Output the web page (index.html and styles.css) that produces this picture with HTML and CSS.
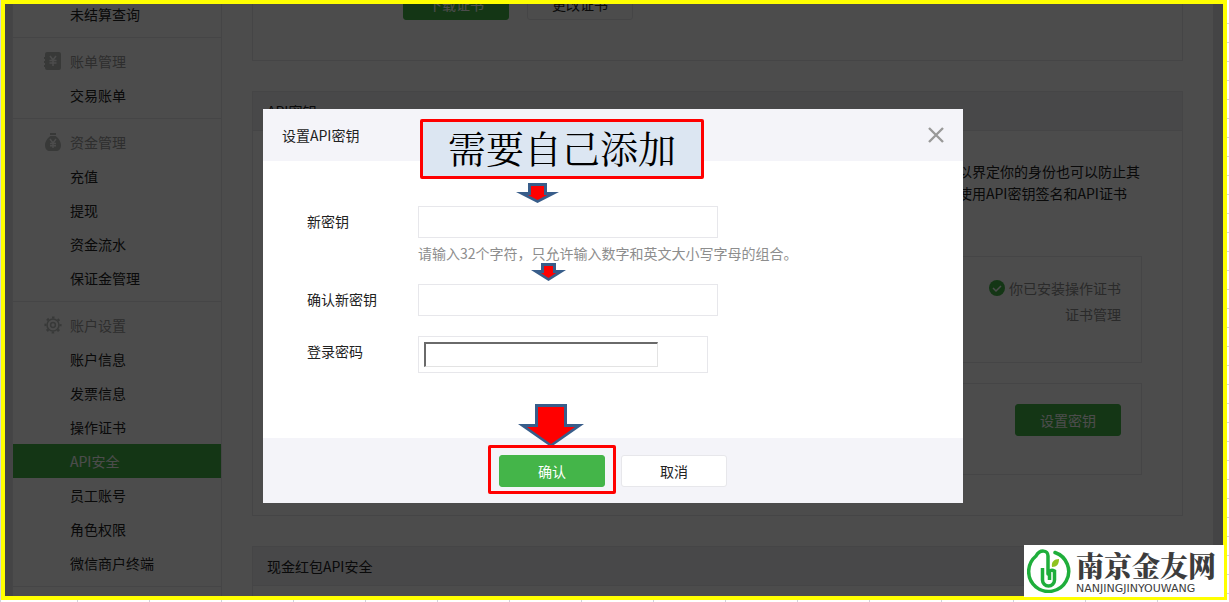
FILE: index.html
```html
<!DOCTYPE html>
<html lang="zh-CN">
<head>
    <meta charset="UTF-8">
    <meta name="viewport" content="width=device-width, initial-scale=1.0">
    <title>API安全</title>
    <link rel="stylesheet" href="styles.css">
</head>
<body>
    <div class="frame">
        <div class="page">
            <nav class="sidebar">
                <div class="menu-group">
                    <a class="menu-item" href="#">未结算查询</a>
                </div>
                <div class="menu-group">
                    <div class="menu-title">
                        <svg class="menu-icon" viewBox="0 0 18 18">
                            <path fill="#bbbfbd" d="M3 0h12a2 2 0 0 1 2 2v14a2 2 0 0 1-2 2H3a2 2 0 0 1-2-2v-1H0v-2h1v-2H0V9h1V7H0V5h1V2a2 2 0 0 1 2-2z"/>
                            <path fill="none" stroke="#fff" stroke-width="1.500" d="M6 4l3 4 3-4M5.500 8.500h7M5.500 11h7M9 8v6"/>
                        </svg>
                        账单管理
                    </div>
                    <a class="menu-item" href="#">交易账单</a>
                </div>
                <div class="menu-group">
                    <div class="menu-title">
                        <svg class="menu-icon" viewBox="0 0 18 18">
                            <path fill="#bbbfbd" d="M6 0h6v2H6zM6.500 3h5c3 2 5.500 5.500 5.500 9 0 4-2 6-5 6H6c-3 0-5-2-5-6 0-3.500 2.500-7 5.500-9z"/>
                            <path fill="none" stroke="#fff" stroke-width="1.400" d="M6 6l3 4 3-4M6 10.500h6M6 12.800h6M9 10v5"/>
                        </svg>
                        资金管理
                    </div>
                    <a class="menu-item" href="#">充值</a>
                    <a class="menu-item" href="#">提现</a>
                    <a class="menu-item" href="#">资金流水</a>
                    <a class="menu-item" href="#">保证金管理</a>
                </div>
                <div class="menu-group">
                    <div class="menu-title">
                        <svg class="menu-icon" viewBox="0 0 18 18" fill="none" stroke="#bbbfbd">
                            <circle cx="9" cy="9" r="6" stroke-width="1.600"/>
                            <circle cx="9" cy="9" r="2.400" stroke-width="1.500"/>
                            <circle cx="9" cy="9" r="7.600" stroke-width="2" stroke-dasharray="2.600 3.370" stroke-dashoffset="1.300"/>
                        </svg>
                        账户设置
                    </div>
                    <a class="menu-item" href="#">账户信息</a>
                    <a class="menu-item" href="#">发票信息</a>
                    <a class="menu-item" href="#">操作证书</a>
                    <a class="menu-item active" href="#">API安全</a>
                    <a class="menu-item" href="#">员工账号</a>
                    <a class="menu-item" href="#">角色权限</a>
                    <a class="menu-item" href="#">微信商户终端</a>
                </div>
                <div class="menu-group"></div>
            </nav>

            <main class="content">
                <section class="card card-cert">
                    <button class="btn btn-primary" type="button">下载证书</button>
                    <button class="btn" type="button">更改证书</button>
                </section>

                <section class="card">
                    <h2 class="card-title">API密钥</h2>
                    <div class="card-body">
                        <p class="card-text">以界定你的身份也可以防止其<br>使用API密钥签名和API证书</p>
                        <div class="panel panel-status">
                            <div class="status">
                                <svg class="status-icon" viewBox="0 0 16 16">
                                    <circle cx="8" cy="8" r="8" fill="#44b549"/>
                                    <path fill="none" stroke="#fff" stroke-width="1.500" d="M4 8l3 3 5-5"/>
                                </svg>
                                你已安装操作证书
                            </div>
                            <a class="panel-link" href="#">证书管理</a>
                        </div>
                        <div class="panel">
                            <button class="btn btn-primary" type="button">设置密钥</button>
                        </div>
                    </div>
                </section>

                <section class="card">
                    <h2 class="card-title">现金红包API安全</h2>
                    <div class="card-body"></div>
                </section>
            </main>
        </div>

        <div class="mask">
            <form class="dialog">
                <header class="dialog-header">
                    <h3 class="dialog-title">设置API密钥</h3>
                    <button class="dialog-close" type="button" aria-label="关闭">
                        <svg viewBox="0 0 16 16" width="16" height="16">
                            <path stroke="#999" stroke-width="2.400" d="M1 1l14 14M15 1L1 15"/>
                        </svg>
                    </button>
                </header>

                <div class="dialog-body">
                    <div class="field">
                        <label class="field-label" for="new-key">新密钥</label>
                        <div class="field-control">
                            <input class="text-input" id="new-key" type="text">
                            <p class="field-tip">请输入32个字符，只允许输入数字和英文大小写字母的组合。</p>
                        </div>
                    </div>
                    <div class="field">
                        <label class="field-label" for="confirm-key">确认新密钥</label>
                        <input class="text-input" id="confirm-key" type="text">
                    </div>
                    <div class="field">
                        <label class="field-label" for="password">登录密码</label>
                        <div class="password-box">
                            <input class="password-input" id="password" type="password">
                        </div>
                    </div>
                </div>

                <footer class="dialog-footer">
                    <button class="btn btn-primary" type="button">确认</button>
                    <button class="btn" type="button">取消</button>
                </footer>

                <!-- annotations -->
                <div class="callout">需要自己添加</div>
                <svg class="arrow arrow-first" viewBox="0 0 43 20">
                    <path fill="#385d8a" d="M12 0h19v9h12L21.500 20 0 9h12z"/>
                    <path fill="#f00" d="M15 3h13v9h3l-9.500 5-9.500-5h3z"/>
                </svg>
                <svg class="arrow arrow-second" viewBox="0 0 35 18">
                    <path fill="#385d8a" d="M10 0h15v7h10L17.500 18 0 7h10z"/>
                    <path fill="#f00" d="M13 3h9v7h3l-7.500 5L10 10h3z"/>
                </svg>
                <svg class="arrow arrow-third" viewBox="0 0 66 43">
                    <path fill="#385d8a" d="M17 0h32v20h17L33 43 0 20h17z"/>
                    <path fill="#f00" d="M20 3h26v20h11L33 40 9 23h11z"/>
                </svg>
                <div class="highlight"></div>
            </form>
        </div>
    </div>

    <div class="logo">
        <svg class="logo-mark" viewBox="0 0 44 44">
            <path fill="none" stroke="#1fae3b" stroke-width="3.500" stroke-linecap="round" d="M28 3.500A20 20 0 1 1 9 7C13 0 21 1 21 7v18"/>
            <path fill="none" stroke="#1fae3b" stroke-width="3.500" d="M15.500 19v12a6 6 0 0 0 12 0v-9c-2-1-5-1-5 1v8"/>
            <path fill="#8fc31f" d="M25 18c-1-5 2-8 7-8 0 5-2 8-7 8z"/>
        </svg>
        <div class="logo-text">
            <div class="logo-name">南京金友网</div>
            <div class="logo-latin">NANJINGJINYOUWANG</div>
        </div>
    </div>
</body>
</html>
```
FILE: styles.css
```css
* {
    box-sizing: border-box;
}

body {
    margin: 0;
    padding: 0 2px 2px 1px;
    height: 100vh;
    overflow: hidden;
    position: relative;
    font-family: "Noto Sans CJK SC", sans-serif;
    font-size: 14px;
    color: #222;
    background-color: #fff;
    background-image:
        repeating-linear-gradient(to bottom, transparent 0, transparent 18px, #d0d3dc 18px, #d0d3dc 19px),
        repeating-linear-gradient(to right, transparent 0, transparent 71px, #d0d3dc 71px, #d0d3dc 72px);
    background-position: 0 5px, 6px 0;
}

h2, h3, p {
    margin: 0;
    font-size: 14px;
    font-weight: normal;
}

a {
    color: inherit;
    text-decoration: none;
}

button, input {
    font: inherit;
}

.frame {
    height: 100%;
    border: 4px solid #ff0;
    position: relative;
    overflow: hidden;
    background: #e3e5e8;
}

/* scrolled a little way down */
.page {
    margin: -16px 10px 0 7px;
    display: flex;
    background: #fff;
}

.sidebar {
    width: 210px;
    flex-shrink: 0;
    border: solid #e7e7eb;
    border-width: 0 1px;
}

.menu-group {
    padding: 6px 0;
    border-bottom: 1px solid #e7e7eb;
}

.menu-group:first-child {
    padding-top: 9px;
}

.menu-title,
.menu-item {
    display: flex;
    align-items: center;
    height: 34px;
    padding-left: 57px;
}

.menu-title {
    padding-left: 31px;
    gap: 8px;
    color: #9a9a9a;
}

.menu-icon {
    width: 18px;
    height: 18px;
}

.menu-item.active {
    background: #44b549;
    color: #fff;
}

.content {
    flex: 1;
    padding: 0 30px;
}

.card {
    border: 1px solid #e7e7eb;
    margin-bottom: 30px;
}

.card-cert {
    display: flex;
    gap: 18px;
    padding: 0 150px 40px;
    border-top: 0;
}

.card-title {
    height: 39px;
    line-height: 38px;
    padding-left: 14px;
    background: #f0f0f6;
    border-bottom: 1px solid #e7e7eb;
}

.card-body {
    padding: 29px 40px 40px;
}

.card-text {
    width: 182px;
    margin: 0 2px 52px auto;
    line-height: 22px;
    white-space: nowrap;
}

.panel {
    display: flex;
    flex-direction: column;
    align-items: flex-end;
    min-height: 92px;
    padding: 20px;
    border: 1px solid #e7e7eb;
}

.panel-status {
    min-height: 107px;
    margin-bottom: 20px;
    padding-top: 18px;
    line-height: 26px;
    color: #8d8d8d;
}

.status {
    display: flex;
    align-items: center;
    gap: 4px;
}

.status-icon {
    width: 16px;
    height: 16px;
}

.btn {
    width: 106px;
    height: 32px;
    padding: 0;
    border: 1px solid #e7e7eb;
    border-radius: 3px;
    background: #fff;
    color: #222;
}

.btn-primary {
    border-color: #44b549;
    background: #44b549;
    color: #fff;
}

.mask {
    position: absolute;
    inset: 0;
    display: flex;
    justify-content: center;
    align-items: flex-start;
    padding: 105px 2px 0 0;
    background: rgba(0, 0, 0, 0.7);
}

.dialog {
    position: relative;
    width: 700px;
    background: #fff;
}

.dialog-header {
    display: flex;
    justify-content: space-between;
    align-items: center;
    height: 52px;
    padding: 0 19px;
    background: #f4f4f9;
}

.dialog-close {
    display: flex;
    padding: 0;
    border: 0;
    background: none;
}

.dialog-body {
    padding: 45px 44px 65px;
}

.field {
    display: flex;
    align-items: flex-start;
    margin-top: 20px;
}

.field:first-child {
    margin-top: 0;
}

.field-label {
    width: 111px;
    line-height: 30px;
}

.text-input {
    display: block;
    width: 300px;
    height: 32px;
    border: 1px solid #e7e7eb;
    background: #fff;
}

.field-tip {
    padding-top: 4px;
    line-height: 22px;
    color: #8d8d8d;
}

.password-box {
    width: 290px;
    padding: 5px;
    border: 1px solid #e7e7eb;
}

.password-input {
    display: block;
    width: 234px;
    height: 25px;
    border: solid;
    border-width: 2px 1px 1px 2px;
    border-color: #6a6a6a #e3e3e3 #e3e3e3 #6a6a6a;
    background: #fff;
}

.dialog-footer {
    display: flex;
    justify-content: center;
    gap: 16px;
    padding: 17px 0 16px;
    background: #f4f4f9;
}

.callout {
    position: absolute;
    left: 157px;
    top: 10px;
    width: 284px;
    height: 60px;
    line-height: 50px;
    border: 3px solid #f00;
    border-radius: 2px;
    background: #dce6f2;
    color: #000;
    font-family: "Noto Serif CJK SC", "Noto Sans CJK SC", serif;
    font-size: 38px;
    text-align: center;
}

.arrow {
    position: absolute;
}

.arrow-first {
    left: 253px;
    top: 74px;
    width: 43px;
}

.arrow-second {
    left: 268px;
    top: 154px;
    width: 35px;
}

.arrow-third {
    left: 255px;
    top: 295px;
    width: 66px;
}

.highlight {
    position: absolute;
    left: 225px;
    top: 336px;
    width: 128px;
    height: 49px;
    border: 3px solid #f00;
    border-radius: 2px;
    pointer-events: none;
}

.logo {
    position: absolute;
    right: 5px;
    bottom: 5px;
    display: flex;
    align-items: center;
    gap: 5px;
    width: 200px;
    height: 52px;
    padding-left: 3px;
    background: #fff;
    color: #3c3c3c;
}

.logo-mark {
    width: 44px;
    height: 44px;
}

.logo-name {
    font-family: "Noto Serif CJK SC", "Noto Sans CJK SC", serif;
    font-size: 28px;
    font-weight: 900;
    line-height: 36px;
}

.logo-latin {
    font-family: "DejaVu Sans", sans-serif;
    font-size: 11px;
    line-height: 12px;
}
```
